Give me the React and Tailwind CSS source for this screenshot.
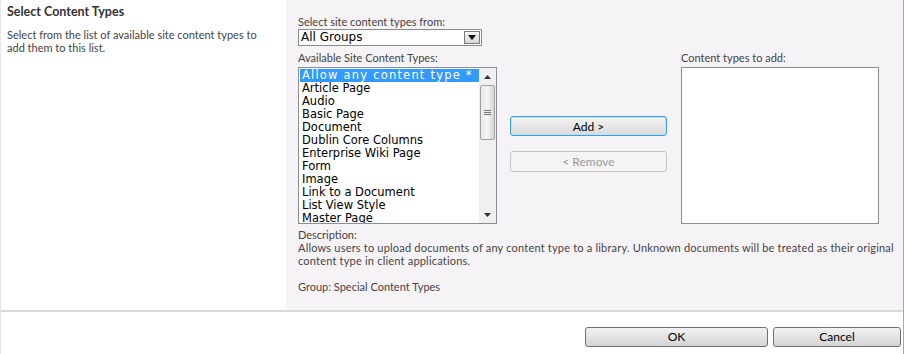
const items = [
  'Allow any content type *',
  'Article Page',
  'Audio',
  'Basic Page',
  'Document',
  'Dublin Core Columns',
  'Enterprise Wiki Page',
  'Form',
  'Image',
  'Link to a Document',
  'List View Style',
  'Master Page',
  'Page',
];

const ui = { fontFamily: 'Lato, "Open Sans", sans-serif' };
const mono = { fontFamily: '"DejaVu Sans", Verdana, sans-serif' };

export default function App() {
  return (
    <div
      className="h-[354px] w-[904px] border-l border-r border-l-[#e6e6e6] border-r-[#a8a8a8] bg-white text-[11px] text-[#444]"
      style={ui}
    >
      <div className="flex h-[310px]">
        <div className="w-[285px] px-[6px] pt-[3px]">
          <div className="text-[12.5px] font-bold text-[#333]">Select Content Types</div>
          <p className="mt-[6px] whitespace-nowrap leading-[13px]">
            Select from the list of available site content types to
            <br />
            add them to this list.
          </p>
        </div>
        <div className="flex-1 bg-[#f6f3f6] pl-[12px] pt-[15px]">
          <div className="leading-[13px]">Select site content types from:</div>
          <div className="mt-[1px] flex h-[17px] w-[184px] border border-[#8a8a8a] bg-white">
            <span className="flex-1 pl-[2px] text-[12px] leading-[15px] text-black" style={mono}>
              All Groups
            </span>
            <span className="m-px flex w-[16px] items-center justify-center border border-[#7a7a7a] bg-gradient-to-b from-[#f4f4f4] to-[#d8d8d8]">
              <svg width="8" height="5" viewBox="0 0 8 5"><path d="M0 0h8L4 5z" fill="#000" /></svg>
            </span>
          </div>
          <div className="flex">
            <div className="w-[199px]">
              <div className="mt-[5px] leading-[13px]">Available Site Content Types:</div>
              <div className="mt-[3px] flex h-[157px] border border-[#8d8d99] bg-white">
                <div className="flex-1 overflow-hidden pl-px pt-px text-[11.5px] text-black" style={mono}>
                  {items.map((t, i) => (
                    <div
                      key={t}
                      className={
                        'h-[13px] whitespace-nowrap pl-[2px] leading-[13px] ' +
                        (i === 0 ? 'bg-[#3399ff] tracking-[1.2px] text-white' : '')
                      }
                    >
                      {t}
                    </div>
                  ))}
                </div>
                <div className="flex w-[17px] flex-col items-center bg-[#f0f0f0]">
                  <div className="flex h-[17px] items-center">
                    <svg width="7" height="4" viewBox="0 0 7 4"><path d="M3.5 0L7 4H0z" fill="#333" /></svg>
                  </div>
                  <div className="flex h-[55px] w-[15px] items-center justify-center rounded-[2px] border border-[#a0a0a0] bg-gradient-to-r from-[#e8e8e8] via-[#f4f4f4] to-[#d6d6d6]">
                    <svg width="7" height="6" viewBox="0 0 7 6"><path d="M0 .5h7M0 2.5h7M0 4.5h7" stroke="#777" /></svg>
                  </div>
                  <div className="flex-1" />
                  <div className="flex h-[17px] items-center">
                    <svg width="7" height="4" viewBox="0 0 7 4"><path d="M0 0h7L3.5 4z" fill="#333" /></svg>
                  </div>
                </div>
              </div>
            </div>
            <div className="ml-[13px] flex w-[157px] flex-col pt-[70px]">
              <button className="h-[20px] rounded-[3px] border border-[#3c9fdc] bg-gradient-to-b from-[#f4f4f4] to-[#dadada] text-[12px] leading-[17px] text-black shadow-[inset_0_0_0_1px_#bfe3f6]">
                Add &gt;
              </button>
              <button className="mt-[15px] h-[21px] rounded-[3px] border border-[#c4c4c4] bg-[#f4f4f4] text-[12px] leading-[18px] text-[#9a9a9a]">
                &lt; Remove
              </button>
            </div>
            <div className="ml-[14px] w-[198px]">
              <div className="mt-[5px] leading-[13px]">Content types to add:</div>
              <div className="mt-[3px] h-[157px] border border-[#8d8d99] bg-white" />
            </div>
          </div>
          <div className="mt-[4px] whitespace-nowrap leading-[13px]">
            <div>Description:</div>
            <div className="tracking-[0.2px]">
              Allows users to upload documents of any content type to a library. Unknown documents will be treated as their original
            </div>
            <div className="tracking-[0.2px]">content type in client applications.</div>
            <div className="mt-[13px]">Group: Special Content Types</div>
          </div>
        </div>
      </div>
      <div className="h-[2px] bg-[#d9d9d9]" />
      <div className="flex justify-end gap-[5px] pr-[2px] pt-[15px]">
        <button className="h-[20px] w-[183px] rounded-[3px] border border-[#707070] bg-gradient-to-b from-[#f2f2f2] to-[#d4d4d4] text-[12px] text-black">
          OK
        </button>
        <button className="h-[20px] w-[128px] rounded-[3px] border border-[#707070] bg-gradient-to-b from-[#f2f2f2] to-[#d4d4d4] text-[12px] text-black">
          Cancel
        </button>
      </div>
    </div>
  );
}
